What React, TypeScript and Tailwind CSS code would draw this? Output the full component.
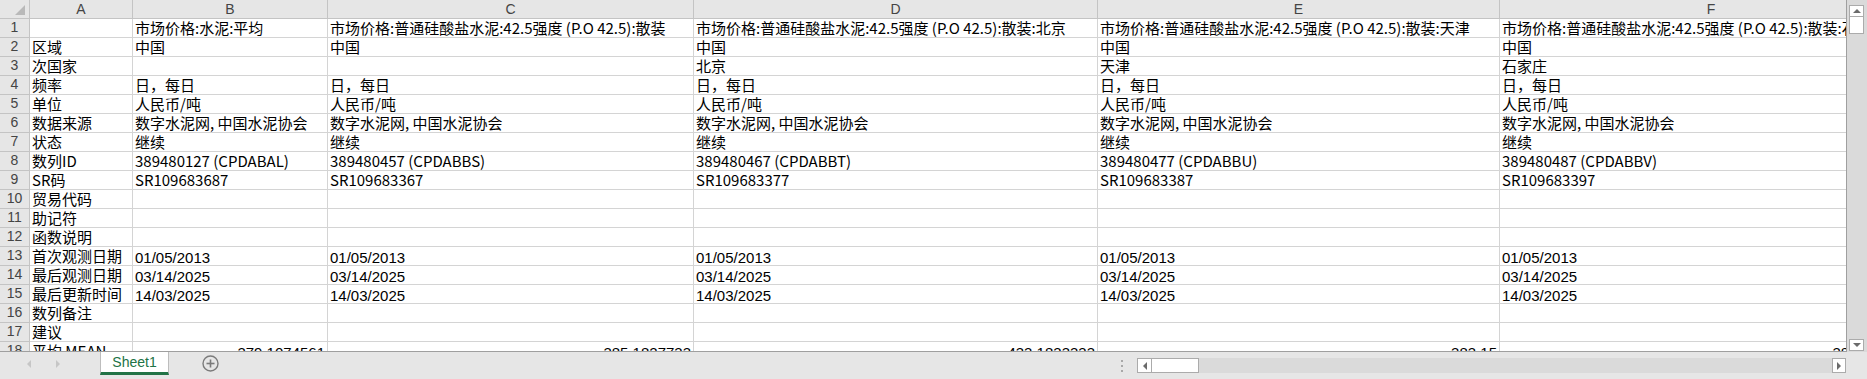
import React from "react";

type Kind = "t" | "d" | "n";
type Cell = { v: string; k: Kind };

const CJK = "font-['Noto_Sans_CJK_SC','Liberation_Sans',sans-serif]";
const LATIN = "font-['Liberation_Sans','Noto_Sans_CJK_SC',sans-serif]";

// column widths incl. right grid line
const COL_W = ["w-[103px]", "w-[195px]", "w-[366px]", "w-[404px]", "w-[402px]", "w-[423px]"];
const LETTERS = ["A", "B", "C", "D", "E", "F"];

const BASE = "市场价格:普通硅酸盐水泥:42.5强度 (P.O 42.5):散装";

const SERIES = [
  { title: "市场价格:水泥:平均", sub: "", id: "389480127 (CPDABAL)", sr: "SR109683687", mean: "379.1074561" },
  { title: BASE, sub: "", id: "389480457 (CPDABBS)", sr: "SR109683367", mean: "385.1827733" },
  { title: BASE + ":北京", sub: "北京", id: "389480467 (CPDABBT)", sr: "SR109683377", mean: "433.1833333" },
  { title: BASE + ":天津", sub: "天津", id: "389480477 (CPDABBU)", sr: "SR109683387", mean: "383.15" },
  { title: BASE + ":石家庄", sub: "石家庄", id: "389480487 (CPDABBV)", sr: "SR109683397", mean: "386.2917647" },
];

const t = (v: string): Cell => ({ v, k: "t" });
const d = (v: string): Cell => ({ v, k: "d" });
const n = (v: string): Cell => ({ v, k: "n" });

const ROWS: Cell[][] = [
  [t(""), ...SERIES.map((s) => t(s.title))],
  [t("区域"), ...SERIES.map(() => t("中国"))],
  [t("次国家"), ...SERIES.map((s) => t(s.sub))],
  [t("频率"), ...SERIES.map(() => t("日，每日"))],
  [t("单位"), ...SERIES.map(() => t("人民币/吨"))],
  [t("数据来源"), ...SERIES.map(() => t("数字水泥网, 中国水泥协会"))],
  [t("状态"), ...SERIES.map(() => t("继续"))],
  [t("数列ID"), ...SERIES.map((s) => t(s.id))],
  [t("SR码"), ...SERIES.map((s) => t(s.sr))],
  [t("贸易代码"), ...SERIES.map(() => t(""))],
  [t("助记符"), ...SERIES.map(() => t(""))],
  [t("函数说明"), ...SERIES.map(() => t(""))],
  [t("首次观测日期"), ...SERIES.map(() => d("01/05/2013"))],
  [t("最后观测日期"), ...SERIES.map(() => d("03/14/2025"))],
  [t("最后更新时间"), ...SERIES.map(() => d("14/03/2025"))],
  [t("数列备注"), ...SERIES.map(() => t(""))],
  [t("建议"), ...SERIES.map(() => t(""))],
  [t("平均 MEAN"), ...SERIES.map((s) => n(s.mean))],
];

function GridCell({ cell, w }: { cell: Cell; w: string }) {
  const kindCls =
    cell.k === "t"
      ? `${CJK} pl-[2px] pb-[2px]`
      : cell.k === "d"
      ? `${LATIN} pl-[2px]`
      : `${LATIN} justify-end pr-[2px]`;
  return (
    <div
      className={`${w} shrink-0 h-full flex items-end whitespace-nowrap border-r border-b border-[#d4d4d4] text-[15px] leading-[15px] text-black ${kindCls}`}
    >
      <span>{cell.v}</span>
    </div>
  );
}

function HeaderRow() {
  return (
    <div className="flex h-[19px] shrink-0">
      <div className="relative w-[30px] shrink-0 h-full bg-[#e6e6e6] border-r border-b border-[#c4c4c4]">
        <svg className="absolute left-[15px] top-[5px]" width="10" height="10" viewBox="0 0 10 10">
          <polygon points="10,0 10,10 0,10" fill="#b9b9b9" />
        </svg>
      </div>
      {LETTERS.map((l, i) => (
        <div
          key={l}
          className={`${COL_W[i]} shrink-0 h-full flex items-center justify-center bg-[#e6e6e6] border-r border-b border-[#c4c4c4] text-[14px] text-[#444] ${LATIN}`}
        >
          {l}
        </div>
      ))}
    </div>
  );
}

function SheetGrid() {
  return (
    <div className="w-[1847px] h-[352px] shrink-0 overflow-hidden bg-white border-r border-b border-[#9f9f9f] flex flex-col">
      <HeaderRow />
      {ROWS.map((row, r) => (
        <div key={r} className="flex h-[19px] shrink-0">
          <div
            className={`w-[30px] shrink-0 h-full flex items-end justify-center pb-[2px] bg-[#e6e6e6] border-r border-b border-[#c4c4c4] text-[14px] leading-[15px] text-[#444] ${LATIN}`}
          >
            {r + 1}
          </div>
          {row.map((cell, c) => (
            <GridCell key={c} cell={cell} w={COL_W[c]} />
          ))}
        </div>
      ))}
    </div>
  );
}

function Arrow({ dir, color = "#6b6b6b" }: { dir: "up" | "down" | "left" | "right"; color?: string }) {
  const pts = {
    up: "0,4 4,0 8,4",
    down: "0,0 8,0 4,4",
    left: "4,0 4,8 0,4",
    right: "0,0 0,8 4,4",
  }[dir];
  const vertical = dir === "up" || dir === "down";
  return (
    <svg width={vertical ? 8 : 4} height={vertical ? 4 : 8} viewBox={vertical ? "0 0 8 4" : "0 0 4 8"}>
      <polygon points={pts} fill={color} />
    </svg>
  );
}

function VScroll() {
  return (
    <div className="w-[20px] h-[352px] shrink-0 bg-[#dadada] flex flex-col pl-[2px] pt-[5px] pb-[1px]">
      <div className="w-[15px] h-[12px] bg-white border border-[#ababab] flex items-center justify-center">
        <Arrow dir="up" />
      </div>
      <div className="w-[15px] h-[17px] bg-white border border-t-0 border-[#ababab]" />
      <div className="flex-1" />
      <div className="w-[15px] h-[12px] bg-white border border-[#ababab] flex items-center justify-center">
        <Arrow dir="down" />
      </div>
    </div>
  );
}

function TabBar() {
  return (
    <div className="h-[27px] shrink-0 flex items-start bg-[#e6e6e6]">
      <div className="w-[100px] h-[23px] flex items-center pl-[27px] gap-[25px]">
        <Arrow dir="left" color="#c6c6c6" />
        <Arrow dir="right" color="#c6c6c6" />
      </div>
      <div className="w-[69px] h-[23px] bg-white border-x border-[#bdbdbd] border-b-[3px] border-b-[#217346] flex items-center justify-center">
        <span className={`text-[14px] text-[#217346] ${LATIN}`}>Sheet1</span>
      </div>
      <div className="ml-[33px] mt-[3px]">
        <svg width="17" height="17" viewBox="0 0 17 17">
          <circle cx="8.5" cy="8.5" r="7.5" fill="none" stroke="#7b7b7b" strokeWidth="1.4" />
          <line x1="4.5" y1="8.5" x2="12.5" y2="8.5" stroke="#7b7b7b" strokeWidth="1.6" />
          <line x1="8.5" y1="4.5" x2="8.5" y2="12.5" stroke="#7b7b7b" strokeWidth="1.6" />
        </svg>
      </div>
      <div className="ml-auto mr-[21px] mt-[6px] flex items-center">
        <div className="flex flex-col gap-[3px]">
          <div className="w-[2px] h-[2px] bg-[#a8a8a8]" />
          <div className="w-[2px] h-[2px] bg-[#a8a8a8]" />
          <div className="w-[2px] h-[2px] bg-[#a8a8a8]" />
        </div>
        <div className="ml-[14px] w-[709px] h-[15px] bg-[#dadada] flex">
          <div className="w-[15px] h-full bg-white border border-[#ababab] flex items-center justify-center">
            <Arrow dir="left" />
          </div>
          <div className="w-[47px] h-full bg-white border border-l-0 border-[#ababab]" />
          <div className="flex-1" />
          <div className="w-[14px] h-full bg-white border border-[#ababab] flex items-center justify-center">
            <Arrow dir="right" />
          </div>
        </div>
      </div>
    </div>
  );
}

export default function App() {
  return (
    <div className="w-[1867px] h-[379px] overflow-hidden bg-[#e6e6e6] flex flex-col">
      <div className="flex h-[352px] shrink-0">
        <SheetGrid />
        <VScroll />
      </div>
      <TabBar />
    </div>
  );
}
